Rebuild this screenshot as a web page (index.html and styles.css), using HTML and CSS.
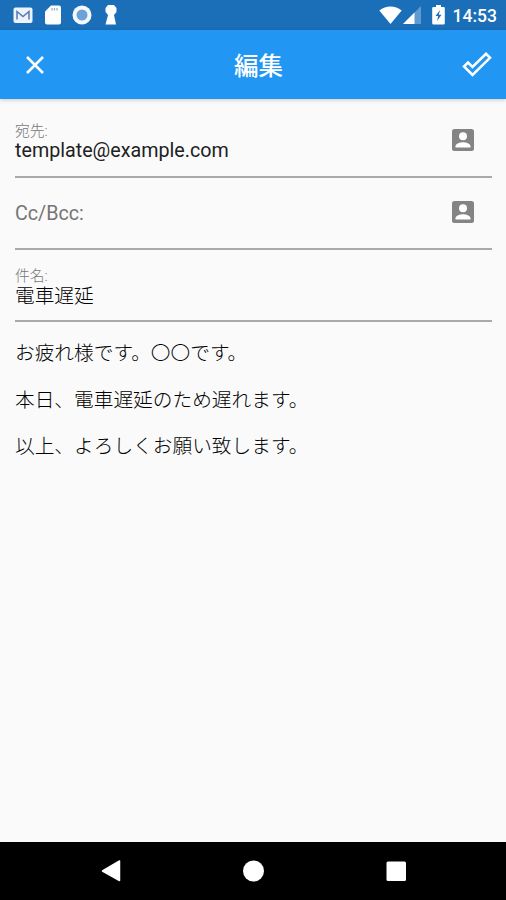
FILE: index.html
```
<!DOCTYPE html>
<html lang="ja">
<head>
    <meta charset="UTF-8">
    <meta name="viewport" content="width=device-width, initial-scale=1.0">
    <title>編集</title>
    <link rel="stylesheet" href="styles.css">
</head>
<body>
    <div class="status-bar">
        <div class="notifications">
            <svg width="20" height="20" viewBox="0 0 20 20">
                <rect x="0.5" y="2.5" width="19" height="15.5" rx="2" fill="#eef2fb"/>
                <path d="M4 14.5V6.500l6 5 6-5v8" fill="none" stroke="#5579b5" stroke-width="1.5"/>
            </svg>
            <svg width="16" height="20" viewBox="0 0 16 20">
                <path d="M6 0.5h8a2 2 0 0 1 2 2v15a2 2 0 0 1-2 2H2a2 2 0 0 1-2-2V6.500z" fill="#fff"/>
                <path d="M7 3v2.500M9.500 3v2.500M12 3v2.500" stroke="#8aabd2" stroke-width="1.200"/>
            </svg>
            <svg width="20" height="20" viewBox="0 0 20 20">
                <circle cx="10" cy="10" r="9.500" fill="#f4f9ff"/>
                <circle cx="10" cy="10" r="5.500" fill="#6ba3d6"/>
            </svg>
            <svg width="14" height="20" viewBox="0 0 14 20">
                <path d="M4 0h6l2.500 3v4L10 10l2 9.500H1.500L4 10 1.500 7V3z" fill="#fff"/>
            </svg>
        </div>
        <div class="system">
            <svg class="wifi" width="23" height="18" viewBox="0 0 23 18">
                <path d="M0.300 4.500C7-1 16-1 22.700 4.500L11.500 18z" fill="#fff"/>
            </svg>
            <svg class="signal" width="18" height="18" viewBox="0 0 18 18">
                <path d="M0 18L18 0v18z" fill="#5f9bd0"/>
                <path d="M0 18L11.500 6.500V18z" fill="#fff"/>
            </svg>
            <svg class="battery" width="13" height="20" viewBox="0 0 13 20">
                <path d="M4 0h5v2h2.500a1.300 1.300 0 0 1 1.300 1.300v15a1.300 1.300 0 0 1-1.300 1.300h-10A1.300 1.300 0 0 1 0.200 18.300v-15A1.300 1.300 0 0 1 1.500 2H4z" fill="#fff"/>
                <path d="M8 5L3.500 11h2.700L5 16l4.600-6.300H6.800z" fill="#1a6fb8"/>
            </svg>
            <span class="time">14:53</span>
        </div>
    </div>

    <header class="toolbar">
        <svg class="close" width="18" height="18" viewBox="0 0 18 18">
            <path d="M1 1l16 16M17 1L1 17" stroke="#fff" stroke-width="2.500"/>
        </svg>
        <h1>編集</h1>
        <svg class="done" width="30" height="26" viewBox="0 0 30 26">
            <path d="M2 14.500L6 10.500 10.500 15 24 1.800 28 5.800 10.500 23z" fill="none" stroke="#fff" stroke-width="2.500"/>
        </svg>
    </header>

    <main>
        <div class="field">
            <div class="field-text">
                <div class="label">宛先:</div>
                <div class="value">template@example.com</div>
            </div>
            <svg class="contact" width="22" height="22" viewBox="0 0 22 22">
                <rect width="22" height="22" rx="2.500" fill="#848484"/>
                <circle cx="11" cy="7.300" r="4" fill="#fff"/>
                <path d="M3.500 18.500v-1.300c0-2.600 5-4 7.500-4s7.500 1.400 7.500 4v1.300z" fill="#fff"/>
            </svg>
        </div>
        <div class="field">
            <div class="field-text">
                <div class="value placeholder">Cc/Bcc:</div>
            </div>
            <svg class="contact" width="22" height="22" viewBox="0 0 22 22">
                <rect width="22" height="22" rx="2.500" fill="#848484"/>
                <circle cx="11" cy="7.300" r="4" fill="#fff"/>
                <path d="M3.500 18.500v-1.300c0-2.600 5-4 7.500-4s7.500 1.400 7.500 4v1.300z" fill="#fff"/>
            </svg>
        </div>
        <div class="field subject">
            <div class="field-text">
                <div class="label">件名:</div>
                <div class="value">電車遅延</div>
            </div>
        </div>
        <div class="message">
            <p>お疲れ様です。〇〇です。</p>
            <p>本日、電車遅延のため遅れます。</p>
            <p>以上、よろしくお願い致します。</p>
        </div>
    </main>

    <nav class="nav-bar">
        <svg width="22" height="22" viewBox="0 0 22 22">
            <path d="M18.500 1v19.500L1.500 11z" fill="#fff" stroke="#fff" stroke-width="1.500" stroke-linejoin="round"/>
        </svg>
        <svg width="22" height="22" viewBox="0 0 22 22">
            <circle cx="10.500" cy="11" r="10.500" fill="#fff"/>
        </svg>
        <svg width="22" height="22" viewBox="0 0 22 22">
            <rect x="1.500" y="1.500" width="19.500" height="19.500" rx="1.500" fill="#fff"/>
        </svg>
    </nav>
</body>
</html>
```
FILE: styles.css
```
* {
    box-sizing: border-box;
}
body {
    margin: 0;
    height: 900px;
    display: flex;
    flex-direction: column;
    font-family: Roboto, "Noto Sans CJK JP", sans-serif;
    background-color: #fafafa;
    color: #212121;
    overflow: hidden;
}
svg {
    display: block;
    flex: none;
}
.status-bar {
    height: 30px;
    padding: 0 9px 0 13px;
    display: flex;
    align-items: center;
    justify-content: space-between;
    background-color: #1a6fb8;
}
.notifications {
    display: flex;
    gap: 11.5px;
}
.system {
    display: flex;
    align-items: center;
}
.signal {
    margin-left: 1px;
}
.battery {
    margin: 0 8px 0 11px;
}
.time {
    color: #fff;
    font-size: 17.5px;
    font-weight: 500;
    line-height: 30px;
    padding-top: 2px;
}
.toolbar {
    height: 69px;
    padding: 0 14px 0 26px;
    display: grid;
    grid-template-columns: 208px 1fr auto;
    align-items: center;
    background-color: #2196f3;
    box-shadow: 0 1px 4px rgba(0, 0, 0, 0.2);
}
.toolbar h1 {
    margin: 0;
    padding-top: 4px;
    color: #fff;
    font-size: 24.5px;
    font-weight: 500;
    line-height: 36px;
}
main {
    flex: 1;
    padding: 7px 14px 0 15px;
}
.field {
    height: 72px;
    display: flex;
    justify-content: space-between;
    border-bottom: 2px solid #aaa;
}
.field-text {
    padding-top: 15px;
}
.label {
    color: #777;
    font-size: 14.8px;
    font-weight: 300;
    line-height: 20px;
}
.value {
    font-size: 19.7px;
    line-height: 20px;
}
.placeholder {
    padding-top: 11px;
    color: #757575;
}
.subject .field-text {
    padding-top: 16px;
}
.subject .value {
    padding-top: 1px;
    color: #000;
    font-weight: 300;
}
.contact {
    margin: 23px 18px 0 0;
}
.message {
    padding-top: 9px;
    color: #000;
    font-size: 19.7px;
    font-weight: 300;
}
.message p {
    margin: 0;
    line-height: 46.7px;
}
.nav-bar {
    height: 58px;
    padding: 0 99px 0 101px;
    display: flex;
    align-items: center;
    justify-content: space-between;
    background-color: #000;
}
```
